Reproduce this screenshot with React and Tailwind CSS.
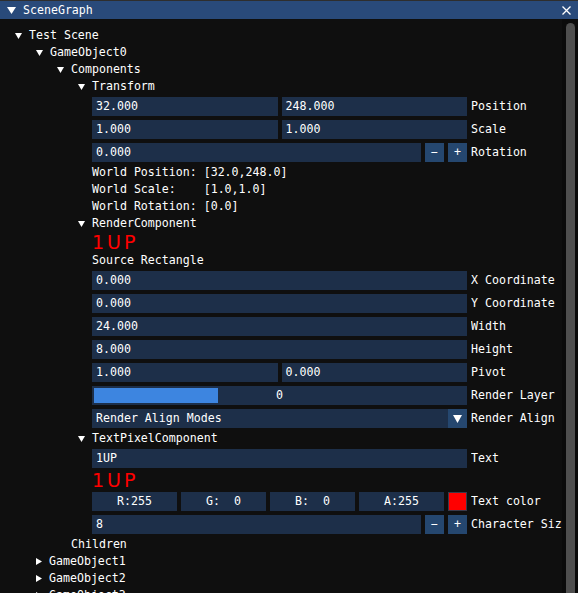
import React from 'react';

const DownArrow = () => (
  <svg width="7" height="6" viewBox="0 0 7 6" className="shrink-0">
    <path d="M0 0H7L3.5 6Z" fill="#ffffff" />
  </svg>
);

const RightArrow = () => (
  <svg width="6" height="7" viewBox="0 0 6 7" className="shrink-0">
    <path d="M0 0L6 3.5L0 7Z" fill="#ffffff" />
  </svg>
);

const TreeNode = ({ pad, label, open = true }) => (
  <div className={`flex shrink-0 items-center h-[13px] gap-[7px] ${pad}`}>
    {open ? <DownArrow /> : <RightArrow />}
    <span className="whitespace-pre">{label}</span>
  </div>
);

const Line = ({ children, pad = 'pl-[92px]' }) => (
  <div className={`h-[13px] shrink-0 whitespace-pre ${pad}`}>{children}</div>
);

const Label = ({ children }) => (
  <span className="ml-[4px] flex-1 overflow-hidden whitespace-pre flex items-center">{children}</span>
);

const Field = ({ value, className = 'flex-1' }) => (
  <div className={`${className} bg-[#1d2f49] flex items-center px-[4px] whitespace-pre`}>{value}</div>
);

const StepButton = ({ sign }) => (
  <div className="w-[19px] shrink-0 bg-[#25476f] flex items-center justify-center">{sign}</div>
);

const Row = ({ children, label }) => (
  <div className="flex shrink-0 h-[19px] pl-[92px]">
    <div className="w-[375px] shrink-0 flex gap-[4px]">{children}</div>
    <Label>{label}</Label>
  </div>
);

const BigText = () => (
  <div className="h-[16px] shrink-0 pl-[92px] flex items-center">
    <span className="font-['DejaVu_Sans',sans-serif] text-[19px] leading-[16px] tracking-[3px] text-[#ff0000]">1UP</span>
  </div>
);

export default function App() {
  return (
    <div className="w-[578px] h-[593px] overflow-hidden bg-[#0f0f0f] text-white font-['DejaVu_Sans_Mono',monospace] text-[11.6px] leading-[13px] flex flex-col">
      <div className="h-[19px] shrink-0 bg-[#294a7a] border-t border-[#2e2e2e] flex items-center">
        <svg width="9" height="7" viewBox="0 0 9 7" className="ml-[7px]">
          <path d="M0 0H9L4.5 7Z" fill="#ffffff" />
        </svg>
        <span className="ml-[7px] flex-1">SceneGraph</span>
        <svg width="9" height="9" viewBox="0 0 9 9" className="mr-[7px]">
          <path d="M0.5 0.5L8.5 8.5M8.5 0.5L0.5 8.5" stroke="#ffffff" strokeWidth="1.3" />
        </svg>
      </div>
      <div className="flex flex-1 min-h-0">
        <div className="w-[562px] shrink-0 overflow-hidden pt-[10px] flex flex-col gap-[4px]">
          <TreeNode pad="pl-[15px]" label="Test Scene" />
          <TreeNode pad="pl-[36px]" label="GameObject0" />
          <TreeNode pad="pl-[57px]" label="Components" />
          <TreeNode pad="pl-[78px]" label="Transform" />
          <Row label="Position">
            <Field value="32.000" />
            <Field value="248.000" />
          </Row>
          <Row label="Scale">
            <Field value="1.000" />
            <Field value="1.000" />
          </Row>
          <Row label="Rotation">
            <Field value="0.000" />
            <StepButton sign="−" />
            <StepButton sign="+" />
          </Row>
          <Line>World Position: [32.0,248.0]</Line>
          <Line>World Scale:    [1.0,1.0]</Line>
          <Line>World Rotation: [0.0]</Line>
          <TreeNode pad="pl-[78px]" label="RenderComponent" />
          <BigText />
          <Line>Source Rectangle</Line>
          <Row label="X Coordinate"><Field value="0.000" /></Row>
          <Row label="Y Coordinate"><Field value="0.000" /></Row>
          <Row label="Width"><Field value="24.000" /></Row>
          <Row label="Height"><Field value="8.000" /></Row>
          <Row label="Pivot">
            <Field value="1.000" />
            <Field value="0.000" />
          </Row>
          <Row label="Render Layer">
            <div className="flex-1 bg-[#1d2f49] relative flex items-center p-[2px]">
              <div className="w-[124px] h-full bg-[#3d85e0]" />
              <span className="absolute inset-0 flex items-center justify-center">0</span>
            </div>
          </Row>
          <Row label="Render Align">
            <div className="flex-1 flex">
              <Field value="Render Align Modes" />
              <div className="w-[19px] shrink-0 bg-[#25476f] flex items-center justify-center">
                <svg width="9" height="8" viewBox="0 0 9 8">
                  <path d="M0 0H9L4.5 8Z" fill="#ffffff" />
                </svg>
              </div>
            </div>
          </Row>
          <TreeNode pad="pl-[78px]" label="TextPixelComponent" />
          <Row label="Text"><Field value="1UP" /></Row>
          <BigText />
          <Row label="Text color">
            <Field className="w-[85px] justify-center" value="R:255" />
            <Field className="w-[85px] justify-center" value="G:  0" />
            <Field className="w-[85px] justify-center" value="B:  0" />
            <Field className="w-[85px] justify-center" value="A:255" />
            <div className="w-[19px] shrink-0 bg-[#ff0000] border border-[#3a3a4a]" />
          </Row>
          <Row label="Character Size">
            <Field value="8" />
            <StepButton sign="−" />
            <StepButton sign="+" />
          </Row>
          <Line pad="pl-[71px]">Children</Line>
          <TreeNode pad="pl-[36px]" label="GameObject1" open={false} />
          <TreeNode pad="pl-[36px]" label="GameObject2" open={false} />
          <TreeNode pad="pl-[36px]" label="GameObject3" open={false} />
        </div>
        <div className="flex-1 bg-[#0b0b0b] pt-[4px] pl-[4px]">
          <div className="w-[9px] h-[600px] rounded-[5px] bg-[#4f4f4f]" />
        </div>
      </div>
    </div>
  );
}
